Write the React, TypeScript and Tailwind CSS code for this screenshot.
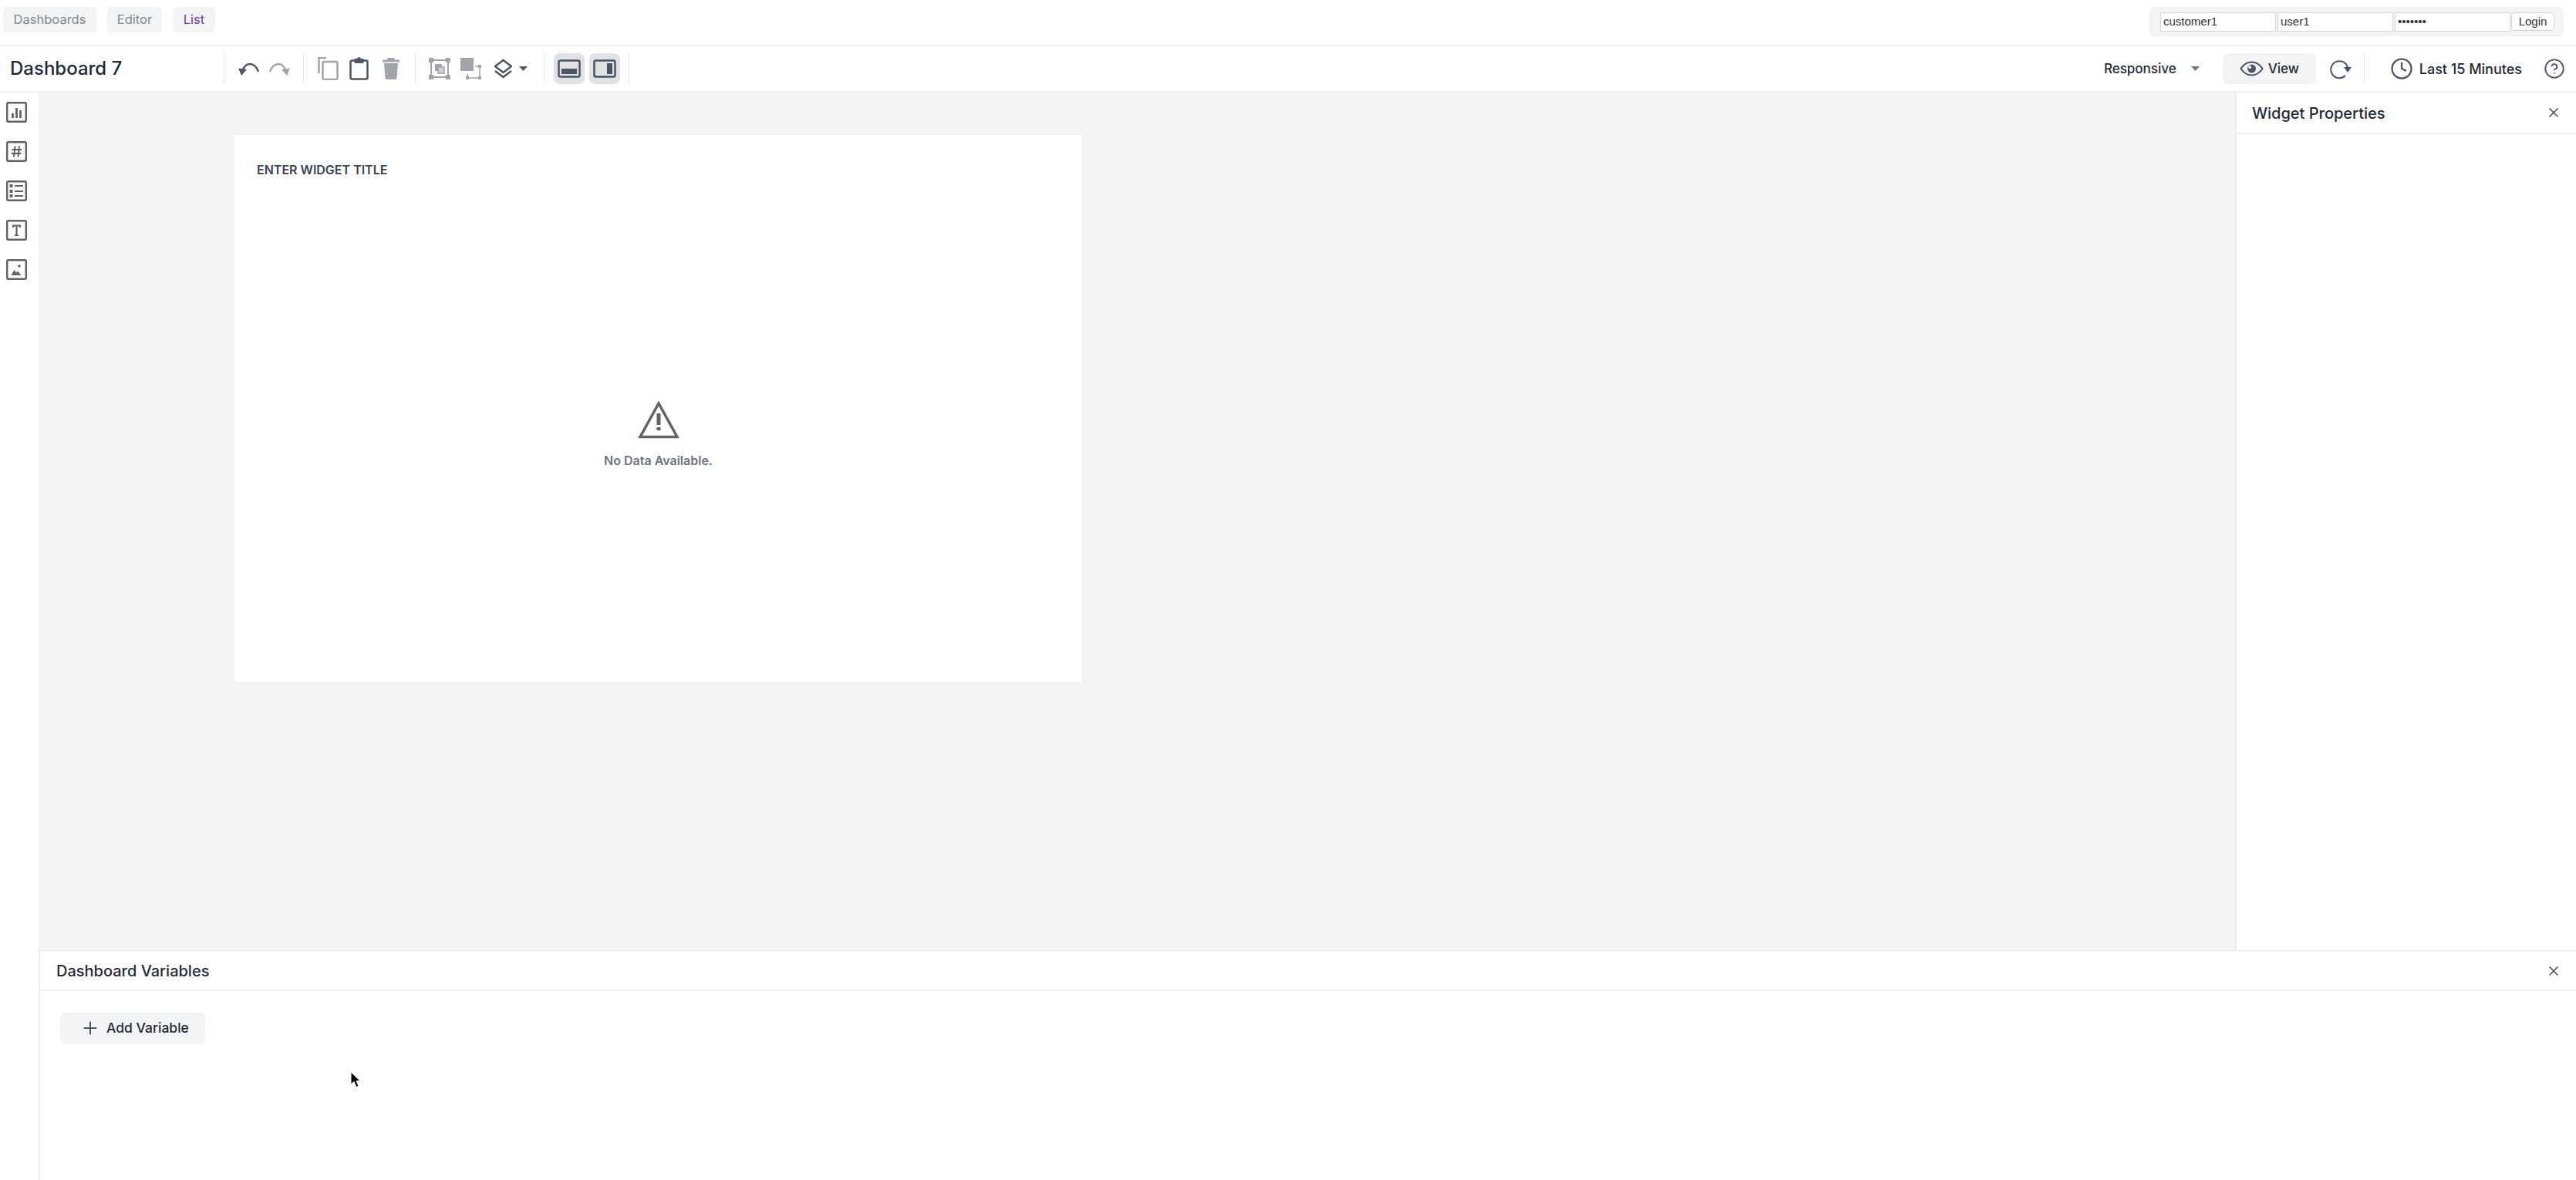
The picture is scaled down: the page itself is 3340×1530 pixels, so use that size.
import React from 'react';
import { X, Plus, Clock, CircleHelp } from 'lucide-react';

const Divider = () => <div className="h-10 w-px bg-[#e5e7eb]" />;

const Caret = ({ color = '#4b5563' }: { color?: string }) => (
  <svg width="11" height="6" viewBox="0 0 11 6"><path d="M0 0h11L5.500 6z" fill={color} /></svg>
);

const Undo = ({ flip, color }: { flip?: boolean; color: string }) => (
  <svg width="28" height="22" viewBox="0 0 28 22" fill="none" className={flip ? '-scale-x-100' : ''}>
    <path d="M5 15C7 8 11 5 15 5s9 3 11 10" stroke={color} strokeWidth="2.500" />
    <path d="M0 10.500l11 1.500-7 8z" fill={color} />
  </svg>
);

const CopyIcon = () => (
  <svg width="27" height="30" viewBox="0 0 27 30" fill="none" stroke="#a1a4aa" strokeWidth="2.500">
    <path d="M11 1H1.500v20" />
    <rect x="6.500" y="6" width="19" height="23" rx="2" />
  </svg>
);

const PasteIcon = () => (
  <svg width="25" height="30" viewBox="0 0 25 30" fill="none" stroke="#4b5563" strokeWidth="2.500">
    <rect x="1.500" y="4.500" width="22" height="24" rx="2" />
    <path d="M7 2.500h3.500a2 2 0 0 1 4 0H18v5H7z" fill="#4b5563" strokeWidth="1" />
  </svg>
);

const TrashIcon = () => (
  <svg width="22" height="28" viewBox="0 0 22 28" fill="#a1a4aa">
    <path d="M7 0h8l1 2.500h6v3H0v-3h6zM2 7h18l-1.500 19a2 2 0 0 1-2 2h-11a2 2 0 0 1-2-2z" />
  </svg>
);

const GroupIcon = () => (
  <svg width="28" height="28" viewBox="0 0 28 28" fill="none">
    <rect x="3" y="3" width="22" height="22" stroke="#a1a4aa" strokeWidth="2" />
    <path d="M0 0h6v6H0zM22 0h6v6h-6zM0 22h6v6H0zM22 22h6v6h-6z" fill="#a1a4aa" />
    <rect x="8" y="8" width="9" height="9" fill="#a1a4aa" />
    <rect x="12" y="12" width="8" height="8" fill="#d1d3d6" stroke="#a1a4aa" strokeWidth="1.500" />
  </svg>
);

const UngroupIcon = () => (
  <svg width="28" height="28" viewBox="0 0 28 28" fill="none">
    <rect x="1" y="0" width="17" height="17" fill="#a1a4aa" />
    <path d="M20 11h6v15H10v-5" stroke="#a1a4aa" strokeWidth="1.500" />
    <path d="M24 9h4v4h-4zM24 24h4v4h-4zM8 24h4v4H8z" fill="#a1a4aa" />
  </svg>
);

const LayersIcon = () => (
  <svg width="25" height="26" viewBox="0 0 25 26" fill="none" stroke="#4b5563" strokeWidth="2.500" strokeLinejoin="round">
    <path d="M12.500 2L23 10l-10.500 8L2 10z" />
    <path d="M2 16l10.500 8L23 16" />
  </svg>
);

const EyeIcon = () => (
  <svg width="31" height="20" viewBox="0 0 31 20" fill="none">
    <path d="M1.500 10C5 4.500 10 1.500 15.500 1.500S26 4.500 29.500 10C26 15.500 21 18.500 15.500 18.500S5 15.500 1.500 10z" stroke="#4b5563" strokeWidth="2" />
    <circle cx="15.500" cy="10" r="5.500" fill="#4b5563" />
    <circle cx="13" cy="8" r="2" fill="#fff" />
  </svg>
);

const RefreshIcon = () => (
  <svg width="29" height="30" viewBox="0 0 29 30" fill="none">
    <path d="M21 24A11 11 0 1 1 24 14" stroke="#4b5563" strokeWidth="2" />
    <path d="M19 13h10l-5 7z" fill="#4b5563" />
  </svg>
);

const PanelToggle = ({ side }: { side: 'bottom' | 'right' }) => (
  <button className="flex h-10 w-10 items-center justify-center rounded-lg bg-[#e0e2e6]">
    <svg width="30" height="24" viewBox="0 0 30 24" fill="none">
      <rect x="1.500" y="1.500" width="27" height="21" rx="2" stroke="#4b5563" strokeWidth="2.500" />
      {side === 'bottom' ? <rect x="5" y="12" width="20" height="7" fill="#4b5563" /> : <rect x="18" y="5" width="7" height="14" fill="#4b5563" />}
    </svg>
  </button>
);

const RailIcon = ({ children }: { children: React.ReactNode }) => (
  <svg width="27" height="27" viewBox="0 0 27 27" fill="none" className="block">
    <rect x="1.200" y="1.200" width="24.600" height="24.600" rx="1.500" stroke="#5f6369" strokeWidth="2.400" />
    {children}
  </svg>
);

const TopField = ({ value }: { value: string }) => (
  <div className="flex h-[25px] w-[150px] items-center border border-[#d4d4d4] bg-white pl-[3px] pt-px font-['Liberation_Sans',sans-serif] text-[15px] text-[#333]">{value}</div>
);

export default function App() {
  return (
    <div className="relative flex h-[1530px] w-[3340px] flex-col overflow-hidden bg-white font-['Inter',sans-serif] text-[#1f2937]">
      {/* top nav */}
      <div className="flex h-[60px] shrink-0 items-start justify-between border-b-2 border-[#eceef0] pl-1 pr-4 pt-[9px]">
        <div className="flex gap-[14px] text-[16.500px] leading-none">
          <div className="flex h-[33px] w-[121px] items-center justify-center rounded-md bg-[#f3f4f6] text-[#7c8a97]">Dashboards</div>
          <div className="flex h-[33px] w-[71px] items-center justify-center rounded-md bg-[#f3f4f6] text-[#7c8a97]">Editor</div>
          <div className="flex h-[33px] w-[55px] items-center justify-center rounded-md bg-[#f3f4f6] text-[#6b3fa0]">List</div>
        </div>
        <div className="flex h-[38px] w-[537px] items-center rounded-md bg-[#f3f4f6] pl-[14px]">
          <TopField value="customer1" />
          <div className="ml-[2px]"><TopField value="user1" /></div>
          <div className="ml-[2px]"><TopField value="•••••••" /></div>
          <div className="ml-px flex h-6 w-[56px] items-center justify-center rounded border border-[#d4d4d4] bg-white pt-px font-['Liberation_Sans',sans-serif] text-[15px] text-[#333]">Login</div>
        </div>
      </div>

      {/* toolbar */}
      <div className="flex h-[60px] shrink-0 items-center border-b-2 border-[#eceef0]">
        <div className="w-[290px] shrink-0 pl-[13px] text-[24px] font-medium">Dashboard 7</div>
        <Divider />
        <div className="ml-[18px] flex items-center gap-[11px]">
          <Undo color="#4b5563" />
          <Undo flip color="#a1a4aa" />
        </div>
        <div className="ml-[17px]"><Divider /></div>
        <div className="ml-[18px] flex items-center">
          <CopyIcon />
          <div className="ml-[14px]"><PasteIcon /></div>
          <div className="ml-[18px]"><TrashIcon /></div>
        </div>
        <div className="ml-5"><Divider /></div>
        <div className="ml-[17px] flex items-center">
          <GroupIcon />
          <div className="ml-3"><UngroupIcon /></div>
          <div className="ml-4"><LayersIcon /></div>
          <div className="ml-2"><Caret /></div>
        </div>
        <div className="ml-[21px]"><Divider /></div>
        <div className="ml-3 flex gap-[6px]">
          <PanelToggle side="bottom" />
          <PanelToggle side="right" />
        </div>
        <div className="ml-[11px]"><Divider /></div>

        <div className="ml-auto flex items-center pr-[14px] text-[17px] font-medium">
          <span className="pt-px">Responsive</span>
          <div className="ml-[19px]"><Caret color="#6b7280" /></div>
          <button className="ml-[30px] flex h-10 w-[121px] items-center rounded-lg bg-[#f3f4f6] pl-[22px]">
            <EyeIcon />
            <span className="ml-[6px] pt-px">View</span>
          </button>
          <div className="ml-[17px]"><RefreshIcon /></div>
          <div className="ml-4"><Divider /></div>
          <Clock size={30} strokeWidth={1.800} className="ml-[33px] text-[#4b5563]" />
          <span className="ml-2 whitespace-nowrap text-[18px]">Last 15 Minutes</span>
          <CircleHelp size={28} strokeWidth={1.600} className="ml-7 text-[#4b5563]" />
        </div>
      </div>

      <div className="flex min-h-0 flex-1">
        {/* left rail */}
        <div className="flex w-[50px] shrink-0 flex-col gap-6 pl-2 pt-3">
          <RailIcon><path d="M8.500 15v6M13.500 8v13M18.500 11v10" stroke="#5f6369" strokeWidth="2.800" /></RailIcon>
          <RailIcon><path d="M11.500 6.500l-1.500 14M17 6.500l-1.500 14M7.500 11h12.500M7 16h12.500" stroke="#5f6369" strokeWidth="2" /></RailIcon>
          <RailIcon><path d="M4.500 5h4v4h-4zM4.500 12h4v4h-4zM4.500 18h4v4h-4z" fill="#5f6369" /><path d="M11 7h11M11 14h11M11 20h11" stroke="#5f6369" strokeWidth="1.800" /></RailIcon>
          <RailIcon><path d="M9 10V7.500h9V10M13.500 7.500V20M11 20h5" stroke="#5f6369" strokeWidth="2.200" /></RailIcon>
          <RailIcon><circle cx="17" cy="9" r="1.800" fill="#5f6369" /><path d="M6.500 21l4-7 2.500 3.500 2-2 4.500 5.500z" fill="#5f6369" /></RailIcon>
        </div>

        <div className="flex min-w-0 flex-1 flex-col">
          <div className="flex min-h-0 flex-1">
            {/* canvas */}
            <div className="min-w-0 flex-1 bg-[#f3f4f6] pl-[254px] pt-[55px]">
              <div className="flex h-[709px] w-[1099px] flex-col bg-white">
                <div className="pl-[29px] pt-[36px] text-[16px] font-semibold leading-[18px] text-[#374151]">ENTER WIDGET TITLE</div>
                <div className="flex flex-1 flex-col items-center pt-[290px]">
                  <svg width="56" height="50" viewBox="0 0 56 50" fill="none">
                    <path d="M28 4L52 47.500H4z" stroke="#5f6369" strokeWidth="3.500" strokeLinejoin="miter" />
                    <path d="M25.500 17h5v15h-5zM25.500 35h5v4h-5z" fill="#5f6369" />
                  </svg>
                  <div className="mt-[18px] text-[16px] font-semibold leading-[20px] text-[#6b7280]">No Data Available.</div>
                </div>
              </div>
            </div>
            {/* widget properties */}
            <div className="w-[442px] shrink-0 border-l-2 border-[#eceef0]">
              <div className="flex h-[54px] items-center justify-between border-b-2 border-[#eceef0] pl-[20px] pr-[19px]">
                <span className="pt-px text-[20px] font-medium">Widget Properties</span>
                <X size={20} strokeWidth={2} className="text-[#4b5563]" />
              </div>
            </div>
          </div>

          {/* dashboard variables */}
          <div className="h-[298px] shrink-0 border-l-2 border-t-2 border-[#eceef0]">
            <div className="flex h-[51px] items-center justify-between border-b-2 border-[#eceef0] pl-[21px] pr-[19px]">
              <span className="pt-px text-[20px] font-medium">Dashboard Variables</span>
              <X size={20} strokeWidth={2} className="text-[#4b5563]" />
            </div>
            <div className="pl-[26px] pt-[28px]">
              <button className="flex h-10 w-[188px] items-center rounded-md bg-[#f3f4f6] pl-[26px] text-[17.500px] font-medium">
                <Plus size={26} strokeWidth={1.800} className="text-[#4b5563]" />
                <span className="ml-2">Add Variable</span>
              </button>
            </div>
          </div>
        </div>
      </div>

      {/* mouse pointer */}
      <svg width="14" height="22" viewBox="0 0 14 22" className="absolute left-[454px] top-[1389px]">
        <path d="M1 1v16l4-3.500 3 7 3-1.300-3-6.700h5z" fill="#000" stroke="#fff" strokeWidth="1" />
      </svg>
    </div>
  );
}
